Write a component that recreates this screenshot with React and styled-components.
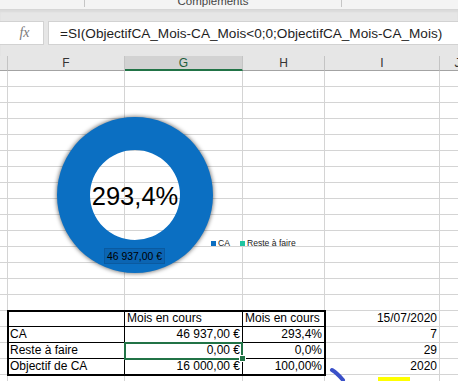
import React from 'react';
import styled, { createGlobalStyle } from 'styled-components';

const GlobalStyle = createGlobalStyle`
  html, body {
    margin: 0;
    padding: 0;
    background: #ffffff;
  }
  body {
    font-family: "Liberation Sans", Arial, sans-serif;
  }
`;

const COLS = '8px 117px 118px 82px 115px 36px';
const GRID = '#d4d4d4';
const EXCEL_GREEN = '#217346';
const CHART_BLUE = '#0b6fc2';

const Window = styled.div`
  width: 458px;
  height: 381px;
  overflow: hidden;
  display: flex;
  flex-direction: column;
  background: #e6e6e6;
`;

// bande du ruban (coupée en haut)
const Ribbon = styled.div`
  height: 10px;
  display: flex;
  background: #f4f4f4;
  overflow: hidden;
  border-bottom: 1px solid #d6d6d6;
  box-sizing: border-box;
`;

const RibbonSpacer = styled.div`
  width: 84px;
`;

const RibbonGroup = styled.div`
  width: 256px;
  height: 7px;
  border-left: 1px solid #c6c6c6;
  border-right: 1px solid #c6c6c6;
  display: flex;
  justify-content: center;
  align-items: flex-end;
  overflow: hidden;
`;

const RibbonLabel = styled.span`
  font-size: 11.5px;
  line-height: 13px;
  color: #444;
  margin-bottom: -1px;
  white-space: nowrap;
`;

const FormulaBand = styled.div`
  display: flex;
  gap: 4px;
  padding: 11px 0 11px 0;
  box-shadow: inset 0 2px 2px rgba(0, 0, 0, 0.05);
`;

const NameBox = styled.div`
  width: 44px;
  height: 24px;
  box-sizing: border-box;
  background: #fff;
  border: 1px solid #d2d2d2;
  border-left: none;
  display: flex;
  align-items: center;
  justify-content: center;
  padding-left: 6px;
  font-family: "Liberation Serif", "DejaVu Serif", serif;
  font-style: italic;
  font-size: 14px;
  color: #7a7a7a;
`;

const FormulaInput = styled.div`
  flex: 1;
  height: 24px;
  box-sizing: border-box;
  background: #fff;
  border: 1px solid #d2d2d2;
  border-right: none;
  display: flex;
  align-items: center;
  padding-left: 11px;
  font-size: 13.6px;
  color: #1e1e1e;
  white-space: nowrap;
  overflow: hidden;
`;

const HeaderRow = styled.div`
  display: grid;
  grid-template-columns: ${COLS};
  height: 15px;
`;

const HeaderCell = styled.div`
  box-sizing: border-box;
  height: 15px;
  background: ${p => (p.$active ? '#d2d2d2' : '#e6e6e6')};
  border-right: 1px solid #c4c4c4;
  border-bottom: ${p => (p.$active ? `2px solid ${EXCEL_GREEN}` : '1px solid #a3a3a3')};
  font-size: 12px;
  line-height: 14px;
  color: ${p => (p.$active ? '#1f5e3b' : '#333')};
  text-align: center;
  overflow: hidden;
`;

const SheetWrap = styled.div`
  position: relative;
  flex: 1;
  overflow: hidden;
  background: #fff;
`;

const Sheet = styled.div`
  display: grid;
  grid-template-columns: ${COLS};
  grid-auto-rows: 16px;
`;

const Cell = styled.div`
  position: relative;
  box-sizing: border-box;
  border-right: 1px solid ${p => (p.$boxed ? '#000' : GRID)};
  border-bottom: 1px solid ${p => (p.$boxed ? '#000' : GRID)};
  padding: 0 2px;
  font-size: 12px;
  line-height: 15px;
  color: #000;
  text-align: ${p => p.$align || 'left'};
  white-space: nowrap;
  overflow: ${p => (p.$selected ? 'visible' : 'hidden')};

  ${p => p.$selected && `
    &::after {
      content: '';
      position: absolute;
      top: -1px;
      left: -1px;
      right: -1px;
      bottom: -2px;
      border: 2px solid ${EXCEL_GREEN};
      z-index: 2;
    }
    &::before {
      content: '';
      position: absolute;
      right: -4px;
      bottom: -4px;
      width: 5px;
      height: 5px;
      background: ${EXCEL_GREEN};
      border: 1px solid #fff;
      z-index: 3;
    }
  `}
`;

const TableBlock = styled.div`
  grid-column: 2 / 5;
  grid-row: 16 / span 4;
  position: relative;
  display: grid;
  grid-template-columns: 117px 118px 82px;
  grid-auto-rows: 16px;

  &::after {
    content: '';
    position: absolute;
    top: -1px;
    left: -1px;
    right: -1px;
    bottom: -1px;
    border: 2px solid #000;
    pointer-events: none;
    z-index: 4;
  }
`;

// graphique flottant sur la feuille
const Chart = styled.div`
  position: absolute;
  left: 50px;
  top: 39px;
  width: 260px;
  height: 170px;
`;

const DonutLayer = styled.div`
  position: absolute;
  left: 0;
  top: 0;
  width: 170px;
  height: 170px;
`;

const CenterValue = styled.div`
  position: absolute;
  left: 0;
  top: 1px;
  width: 170px;
  height: 170px;
  display: flex;
  align-items: center;
  justify-content: center;
  font-size: 25.5px;
  color: #000;
`;

const DataLabel = styled.div`
  position: absolute;
  left: 54px;
  top: 138px;
  width: 61px;
  height: 16px;
  box-sizing: border-box;
  background: #0b65b3;
  border: 1px solid #0a5aa0;
  display: flex;
  align-items: center;
  justify-content: center;
  font-size: 10.4px;
  color: #000;
  white-space: nowrap;
`;

const Legend = styled.div`
  position: absolute;
  left: 161px;
  top: 128px;
  display: flex;
  align-items: center;
  gap: 10px;
  font-size: 8.6px;
  color: #222;
`;

const LegendItem = styled.div`
  display: flex;
  align-items: center;
  gap: 2px;
`;

const Swatch = styled.span`
  width: 5px;
  height: 5px;
  background: ${p => p.$color};
`;

const Ink = styled.svg`
  position: absolute;
  left: 320px;
  top: 290px;
  overflow: visible;
`;

const headers = ['', 'F', 'G', 'H', 'I', 'J'];

const tableRows = [
  ['', 'Mois en cours', 'Mois en cours'],
  ['CA', '46 937,00 €', '293,4%'],
  ['Reste à faire', '0,00 €', '0,0%'],
  ['Objectif de CA', '16 000,00 €', '100,00%'],
];

const sideValues = ['15/07/2020', '7', '29', '2020'];

const Donut = () => {
  const cx = 85;
  const cy = 85;
  const R = 78;
  const r = 45;
  const ring = `M ${cx - R} ${cy} a ${R} ${R} 0 1 0 ${2 * R} 0 a ${R} ${R} 0 1 0 ${-2 * R} 0 Z
    M ${cx - r} ${cy} a ${r} ${r} 0 1 1 ${2 * r} 0 a ${r} ${r} 0 1 1 ${-2 * r} 0 Z`;
  return (
    <svg width="170" height="170" viewBox="0 0 170 170">
      <defs>
        <filter id="soft" x="-20%" y="-20%" width="140%" height="140%">
          <feGaussianBlur stdDeviation="2" />
        </filter>
        <mask id="outside">
          <rect x="0" y="0" width="170" height="170" fill="#fff" />
          <circle cx={cx} cy={cy} r={R - 1} fill="#000" />
        </mask>
      </defs>
      <g mask="url(#outside)">
        <circle cx={cx} cy={cy} r={R + 0.5} fill="rgba(0,0,0,0.55)" filter="url(#soft)" />
      </g>
      <path d={ring} fill={CHART_BLUE} fillRule="evenodd" />
    </svg>
  );
};

const App = () => {
  const cells = [];
  for (let row = 0; row < 20; row++) {
    const inTable = row >= 15 && row <= 18;
    for (let col = 0; col < 6; col++) {
      if (inTable && col >= 1 && col <= 3) continue;
      let text = '';
      let align = 'left';
      if (inTable && col === 4) {
        text = sideValues[row - 15];
        align = 'right';
      }
      cells.push(
        <Cell key={`${row}-${col}`} $align={align}>
          {text}
        </Cell>
      );
    }
  }

  return (
    <>
      <GlobalStyle />
      <Window>
        <Ribbon>
          <RibbonSpacer />
          <RibbonGroup>
            <RibbonLabel>Compléments</RibbonLabel>
          </RibbonGroup>
        </Ribbon>
        <FormulaBand>
          <NameBox>fx</NameBox>
          <FormulaInput>=SI(ObjectifCA_Mois-CA_Mois&lt;0;0;ObjectifCA_Mois-CA_Mois)</FormulaInput>
        </FormulaBand>
        <HeaderRow>
          {headers.map((h, i) => (
            <HeaderCell key={i} $active={h === 'G'}>
              {h}
            </HeaderCell>
          ))}
        </HeaderRow>
        <SheetWrap>
          <Sheet>
            <TableBlock>
              {tableRows.map((r, ri) =>
                r.map((v, ci) => (
                  <Cell
                    key={`t${ri}-${ci}`}
                    $boxed
                    $align={ri === 0 || ci === 0 ? 'left' : 'right'}
                    $selected={ri === 2 && ci === 1}
                  >
                    {v}
                  </Cell>
                ))
              )}
            </TableBlock>
            {cells}
          </Sheet>

          <Chart>
            <DonutLayer>
              <Donut />
            </DonutLayer>
            <CenterValue>293,4%</CenterValue>
            <DataLabel>46 937,00 €</DataLabel>
            <Legend>
              <LegendItem>
                <Swatch $color={CHART_BLUE} />
                CA
              </LegendItem>
              <LegendItem>
                <Swatch $color="#1fc4a0" />
                Reste à faire
              </LegendItem>
            </Legend>
          </Chart>

          <Ink width="100" height="30">
            <path d="M 12 9 Q 17 12 23 19" stroke="#3a50c8" strokeWidth="4" fill="none" strokeLinecap="round" />
            <rect x="58" y="16" width="32" height="6" fill="#ffff00" />
          </Ink>
        </SheetWrap>
      </Window>
    </>
  );
};

export default App;
